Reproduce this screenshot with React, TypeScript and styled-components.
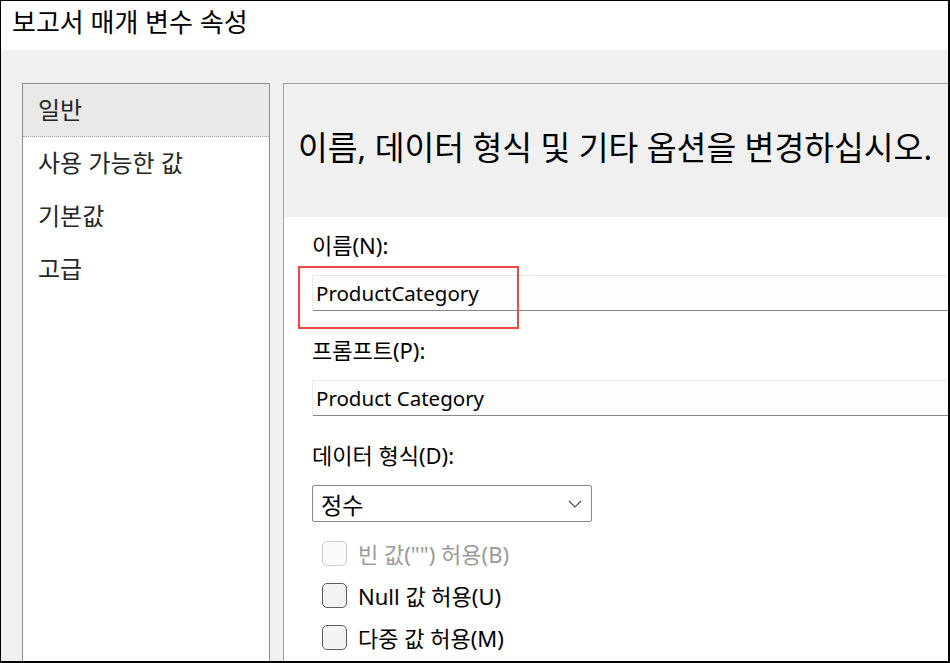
import React from "react";
import styled, { createGlobalStyle } from "styled-components";

const Global = createGlobalStyle`
  html, body { margin: 0; padding: 0; background: #ffffff; }
  * { box-sizing: border-box; }
  body { font-family: "Noto Sans", "Noto Sans CJK KR", sans-serif; }
`;

const Frame = styled.div`
  width: 950px;
  height: 663px;
  border-style: solid;
  border-color: #000;
  border-width: 1px 2px 2px 1px;
  display: flex;
  flex-direction: column;
  overflow: hidden;
  background: #f0f0f0;
`;

const TitleBar = styled.div`
  height: 49px;
  flex: none;
  background: #ffffff;
  display: flex;
  align-items: center;
  padding-left: 11px;
  padding-bottom: 10px;
  font-size: 26px;
  color: #000;
`;

const Body = styled.div`
  flex: 1;
  display: flex;
  padding: 33px 0 0 21px;
  gap: 13px;
  min-height: 0;
`;

const NavList = styled.div`
  width: 248px;
  flex: none;
  background: #ffffff;
  border: 1px solid #8c8c90;
  border-bottom: none;
  display: flex;
  flex-direction: column;
`;

const NavItem = styled.div<{ $active?: boolean }>`
  height: 53px;
  display: flex;
  align-items: center;
  padding-left: 15px;
  padding-bottom: 3px;
  font-size: 24px;
  color: #262626;
  background: ${(p) => (p.$active ? "#e9e9e9" : "transparent")};
  border-bottom: 1px ${(p) => (p.$active ? "dotted #a8a8a8" : "solid transparent")};
`;

const Panel = styled.div`
  flex: 1;
  min-width: 0;
  display: flex;
  flex-direction: column;
  border-left: 1px solid #a0a0a0;
  border-top: 1px solid #a0a0a0;
`;

const PanelHeader = styled.div`
  height: 133px;
  flex: none;
  display: flex;
  align-items: center;
  padding-left: 14px;
  padding-bottom: 10px;
  background: #f0f0f0;
  font-size: 32.4px;
  color: #000;
  white-space: nowrap;
`;

const Form = styled.div`
  flex: 1;
  background: #ffffff;
  padding: 14px 0 0 28px;
  display: flex;
  flex-direction: column;
`;

const Label = styled.div`
  height: 28px;
  line-height: 28px;
  font-size: 22px;
  color: #000;
  white-space: nowrap;
`;

const FieldWrap = styled.div`
  position: relative;
  margin-top: 16px;
  margin-bottom: 25px;
`;

const TextBox = styled.div`
  width: 680px;
  height: 36px;
  background: #fdfdfd;
  border: 1px solid #ebebeb;
  border-bottom: 1px solid #878787;
  border-radius: 2px;
  display: flex;
  align-items: center;
  padding-left: 3px;
  font-size: 20.5px;
  color: #000;
  white-space: nowrap;
`;

const Highlight = styled.div`
  position: absolute;
  left: -14px;
  top: -9px;
  width: 221px;
  height: 63px;
  border: 2px solid #f04646;
  pointer-events: none;
`;

const Select = styled.div`
  width: 280px;
  height: 37px;
  margin-top: 16px;
  background: #ffffff;
  border: 1px solid #8a8a8a;
  border-radius: 2px;
  display: flex;
  align-items: center;
  justify-content: space-between;
  padding: 0 9px 0 8px;
  font-size: 23px;
  color: #000;
`;

const Checks = styled.div`
  margin-top: 10px;
  padding-left: 10px;
  display: flex;
  flex-direction: column;
`;

const CheckRow = styled.div<{ $disabled?: boolean }>`
  height: 42px;
  display: flex;
  align-items: center;
  gap: 11px;
  font-size: 22px;
  color: ${(p) => (p.$disabled ? "#9a9a9a" : "#000")};
  white-space: nowrap;
`;

const Box = styled.div<{ $disabled?: boolean }>`
  width: 25px;
  height: 25px;
  flex: none;
  border-radius: 5px;
  border: 1px solid ${(p) => (p.$disabled ? "#cdcdcd" : "#5c5c5c")};
  background: ${(p) => (p.$disabled ? "#fafafa" : "#f3f3f3")};
`;

const Chevron = () => (
  <svg width="14" height="8" viewBox="0 0 14 8" fill="none">
    <path d="M1 1 L7 7 L13 1" stroke="#4a4a4a" strokeWidth="1.1" />
  </svg>
);

export default function App() {
  return (
    <>
      <Global />
      <Frame>
        <TitleBar>보고서 매개 변수 속성</TitleBar>
        <Body>
          <NavList>
            <NavItem $active>일반</NavItem>
            <NavItem>사용 가능한 값</NavItem>
            <NavItem>기본값</NavItem>
            <NavItem>고급</NavItem>
          </NavList>
          <Panel>
            <PanelHeader>이름, 데이터 형식 및 기타 옵션을 변경하십시오.</PanelHeader>
            <Form>
              <Label>이름(N):</Label>
              <FieldWrap>
                <TextBox>ProductCategory</TextBox>
                <Highlight />
              </FieldWrap>
              <Label>프롬프트(P):</Label>
              <FieldWrap>
                <TextBox>Product Category</TextBox>
              </FieldWrap>
              <Label>데이터 형식(D):</Label>
              <Select>
                <span>정수</span>
                <Chevron />
              </Select>
              <Checks>
                <CheckRow $disabled>
                  <Box $disabled />
                  빈 값("") 허용(B)
                </CheckRow>
                <CheckRow>
                  <Box />
                  Null 값 허용(U)
                </CheckRow>
                <CheckRow>
                  <Box />
                  다중 값 허용(M)
                </CheckRow>
              </Checks>
            </Form>
          </Panel>
        </Body>
      </Frame>
    </>
  );
}
